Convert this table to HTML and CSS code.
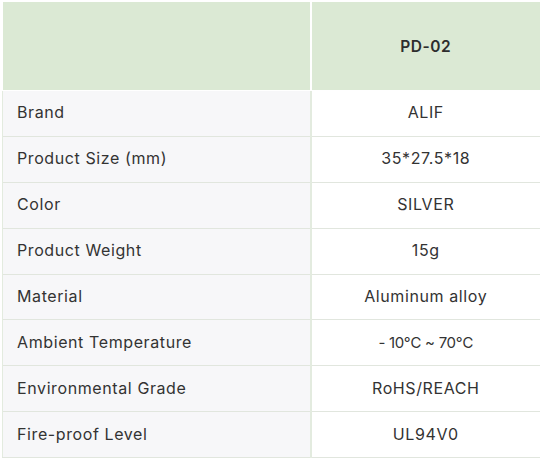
FILE: index.html
```html
<!DOCTYPE html>
<html>
<head>
<meta charset="utf-8">
<link rel="stylesheet" href="styles.css">
</head>
<body>
<table class="spec">
  <thead>
    <tr><th class="blank"></th><th>PD-02</th></tr>
  </thead>
  <tbody>
    <tr><td class="label">Brand</td><td class="val">ALIF</td></tr>
    <tr><td class="label">Product Size (mm)</td><td class="val">35*27.5*18</td></tr>
    <tr><td class="label">Color</td><td class="val">SILVER</td></tr>
    <tr><td class="label">Product Weight</td><td class="val">15g</td></tr>
    <tr><td class="label">Material</td><td class="val">Aluminum alloy</td></tr>
    <tr><td class="label">Ambient Temperature</td><td class="val"><span class="temp">- 10℃ ~ 70℃</span></td></tr>
    <tr><td class="label">Environmental Grade</td><td class="val">RoHS/REACH</td></tr>
    <tr><td class="label">Fire-proof Level</td><td class="val">UL94V0</td></tr>
  </tbody>
</table>
</body>
</html>
```
FILE: styles.css
```css
html, body { margin: 0; padding: 0; background: #fff; }
body { padding: 2px 0 0 2px; font-family: "Inter", "Open Sans", sans-serif; color: #333; }
.spec {
  border-collapse: collapse;
  width: 538px;
  table-layout: fixed;
  font-size: 16px;
  letter-spacing: 0.6px;
}
.spec th {
  background: #dbe9d4;
  height: 88px;
  padding: 0;
  font-weight: 600;
  font-size: 15.5px;
  letter-spacing: 0.5px;
  color: #2d2d2d;
  text-align: center;
  border-left: 2px solid #fff;
  border-bottom: 1px solid #fff;
}
.spec th.blank { width: 307px; border-left: 0; }
.spec td {
  height: 45.875px;
  padding: 0 0 2px 0;
  box-sizing: border-box;
  border-top: 1px solid #e1e6de;
}
.spec tbody tr:first-child td { border-top: 0; }
.spec tbody tr:last-child td { border-bottom: 1px solid #e1e6de; }
.spec td.label {
  background: #f7f7f9;
  padding-left: 14px;
  border-left: 1px solid #e3ebdf;
  border-right: 2px solid #e3ebdf;
}
.spec td.val {
  text-align: center;
  background: #fff;
}
.temp {
  font-size: 15px;
  letter-spacing: -0.3px;
}
```
